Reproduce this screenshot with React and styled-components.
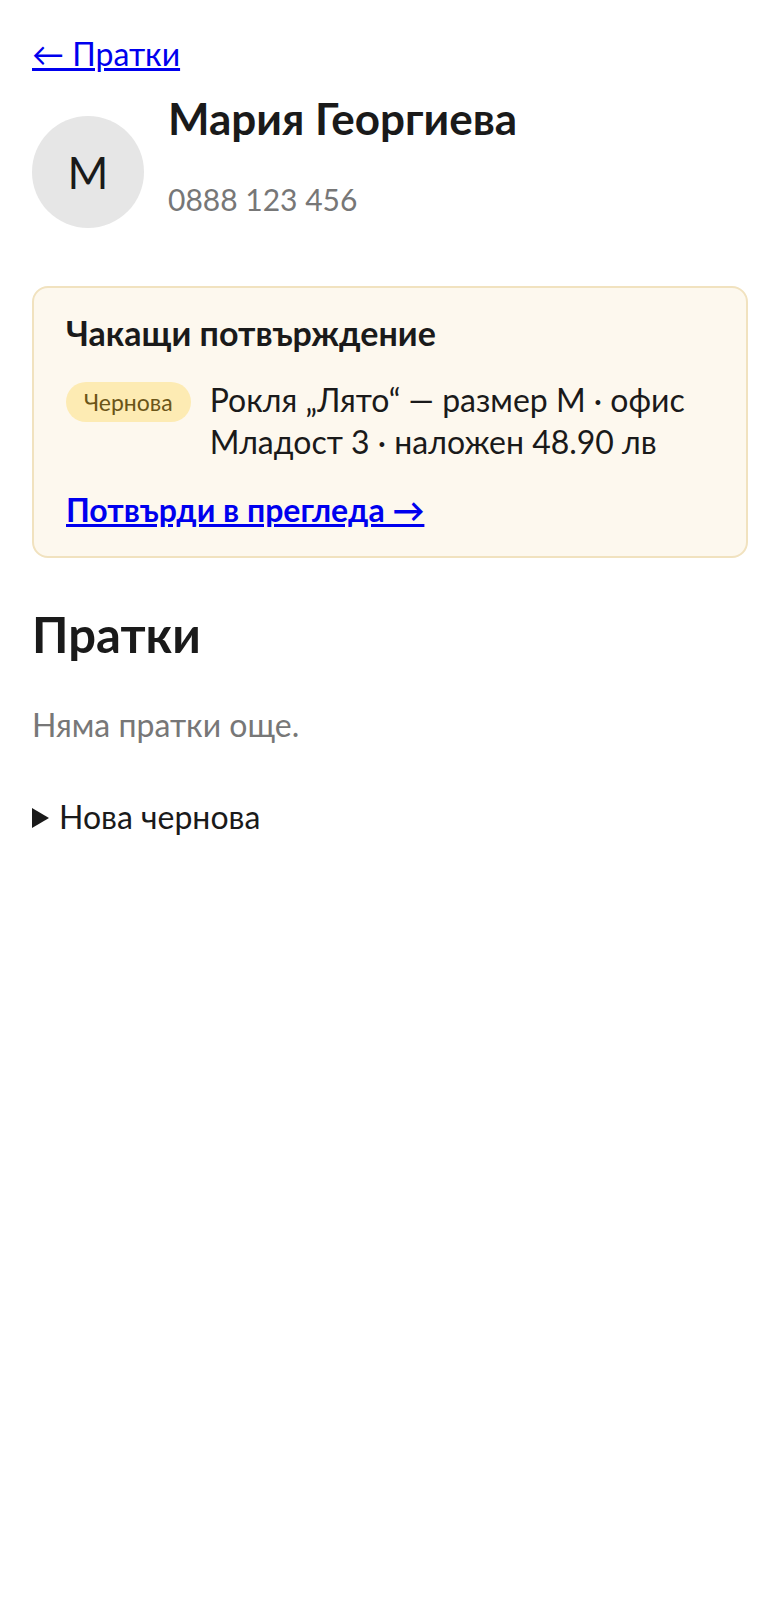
import * as React from "react"
import styled, { createGlobalStyle } from "styled-components"

const GlobalStyle = createGlobalStyle`
  html, body {
    margin: 0;
    background: #fff;
  }
  body {
    font-family: Lato, "Noto Sans", sans-serif;
    color: #1a1a1a;
  }
`

const Page = styled.main`
  padding: 32px;
`

const BackLink = styled.a`
  display: inline-block;
  font-size: 32px;
  line-height: 44px;
  color: #0000ee;
  text-decoration: underline;
`

const Header = styled.header`
  display: flex;
  align-items: flex-start;
  gap: 24px;
  margin-top: 16px;
`

const Avatar = styled.div`
  flex: none;
  width: 112px;
  height: 112px;
  margin-top: 24px;
  border-radius: 50%;
  background: #e6e6e6;
  display: flex;
  align-items: center;
  justify-content: center;
  font-size: 44px;
  color: #1a1a1a;
`

const Who = styled.div`
  display: flex;
  flex-direction: column;
`

const Name = styled.h1`
  margin: 0;
  font-size: 44px;
  line-height: 52px;
  font-weight: 700;
`

const Phone = styled.p`
  margin: 35px 0 0;
  font-size: 30px;
  line-height: 40px;
  color: #777;
`

const Pending = styled.section`
  margin-top: 58px;
  padding: 25px 32px 25px;
  border: 2px solid #f1e2bf;
  border-radius: 16px;
  background: #fdf8ee;
  display: flex;
  flex-direction: column;
  gap: 26px;
`

const PendingTitle = styled.h3`
  margin: 0;
  font-size: 34px;
  line-height: 40px;
  font-weight: 700;
`

const Draft = styled.div`
  display: flex;
  align-items: flex-start;
  gap: 19px;
`

const Badge = styled.span`
  flex: none;
  margin-top: 3px;
  height: 40px;
  padding: 0 18px;
  border-radius: 20px;
  background: ${p => (p.$tone === "draft" ? "#fdebb3" : "#e6e6e6")};
  color: ${p => (p.$tone === "draft" ? "#6b5518" : "#444")};
  font-size: 23px;
  line-height: 40px;
`

const DraftText = styled.p`
  margin: 0;
  font-size: 32px;
  line-height: 42px;
`

const ConfirmLink = styled.a`
  align-self: flex-start;
  font-size: 32px;
  line-height: 42px;
  font-weight: 700;
  color: #0000ee;
  text-decoration: underline;
`

const SectionTitle = styled.h2`
  margin: 47px 0 0;
  font-size: 49px;
  line-height: 58px;
  font-weight: 700;
`

const Empty = styled.p`
  margin: 40px 0 0;
  font-size: 32px;
  line-height: 44px;
  color: #777;
`

const NewDraft = styled.details`
  margin-top: 48px;
  font-size: 32px;
  line-height: 44px;
`

// closed disclosure triangle drawn with borders instead of the UA marker
const Summary = styled.summary`
  display: flex;
  align-items: center;
  gap: 10px;
  list-style: none;
  cursor: pointer;

  &::-webkit-details-marker {
    display: none;
  }

  &::before {
    content: "";
    width: 0;
    height: 0;
    margin-top: 2px;
    border-left: 17px solid #1a1a1a;
    border-top: 10px solid transparent;
    border-bottom: 10px solid transparent;
  }

  details[open] > &::before {
    transform: rotate(90deg);
  }
`

export default function App() {
  const client = { name: "Мария Георгиева", phone: "0888 123 456" }
  const draft = "Рокля „Лято“ — размер M · офис Младост 3 · наложен 48.90 лв"

  return (
    <>
      <GlobalStyle />
      <Page>
        <BackLink href="#">← Пратки</BackLink>

        <Header>
          <Avatar>{client.name.charAt(0)}</Avatar>
          <Who>
            <Name>{client.name}</Name>
            <Phone>{client.phone}</Phone>
          </Who>
        </Header>

        <Pending>
          <PendingTitle>Чакащи потвърждение</PendingTitle>
          <Draft>
            <Badge $tone="draft">Чернова</Badge>
            <DraftText>{draft}</DraftText>
          </Draft>
          <ConfirmLink href="#">Потвърди в прегледа →</ConfirmLink>
        </Pending>

        <SectionTitle>Пратки</SectionTitle>
        <Empty>Няма пратки още.</Empty>

        <NewDraft>
          <Summary>Нова чернова</Summary>
        </NewDraft>
      </Page>
    </>
  )
}
